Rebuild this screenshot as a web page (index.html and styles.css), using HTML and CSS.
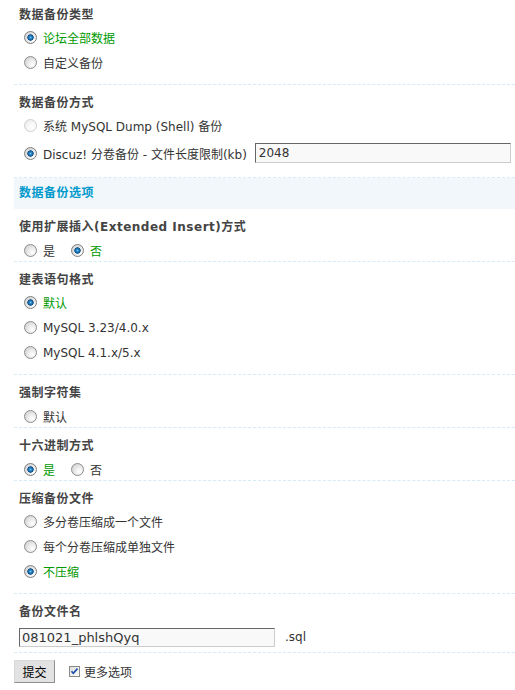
FILE: index.html
```html
<!DOCTYPE html>
<html lang="zh-CN">
<head>
<meta charset="utf-8">
<title>数据备份</title>
<link rel="stylesheet" href="styles.css">
</head>
<body>
<form class="page">
  <div class="sec first">
    <div class="hd">数据备份类型</div>
    <ul class="opts">
      <li><label class="opt on"><input class="radio" type="radio" name="type" checked>论坛全部数据</label></li>
      <li><label class="opt"><input class="radio" type="radio" name="type">自定义备份</label></li>
    </ul>
  </div>

  <div class="sec">
    <div class="hd">数据备份方式</div>
    <ul class="opts">
      <li><label class="opt"><input class="radio" type="radio" name="method" disabled>系统 MySQL Dump (Shell) 备份</label></li>
      <li class="tall"><label class="opt"><input class="radio" type="radio" name="method" checked>Discuz! 分卷备份 - 文件长度限制(kb)</label><input class="txt size" type="text" value="2048"></li>
    </ul>
  </div>

  <div class="partition">数据备份选项</div>

  <div class="sec">
    <div class="hd">使用扩展插入(Extended Insert)方式</div>
    <div class="inline">
      <label class="opt"><input class="radio" type="radio" name="ext">是</label>
      <label class="opt on"><input class="radio" type="radio" name="ext" checked>否</label>
    </div>
  </div>

  <div class="sec">
    <div class="hd">建表语句格式</div>
    <ul class="opts">
      <li><label class="opt on"><input class="radio" type="radio" name="ver" checked>默认</label></li>
      <li><label class="opt"><input class="radio" type="radio" name="ver">MySQL 3.23/4.0.x</label></li>
      <li><label class="opt"><input class="radio" type="radio" name="ver">MySQL 4.1.x/5.x</label></li>
    </ul>
  </div>

  <div class="sec">
    <div class="hd">强制字符集</div>
    <div class="inline">
      <label class="opt"><input class="radio" type="radio" name="charset">默认</label>
    </div>
  </div>

  <div class="sec">
    <div class="hd">十六进制方式</div>
    <div class="inline">
      <label class="opt on"><input class="radio" type="radio" name="hex" checked>是</label>
      <label class="opt"><input class="radio" type="radio" name="hex">否</label>
    </div>
  </div>

  <div class="sec">
    <div class="hd">压缩备份文件</div>
    <ul class="opts">
      <li><label class="opt"><input class="radio" type="radio" name="zip">多分卷压缩成一个文件</label></li>
      <li><label class="opt"><input class="radio" type="radio" name="zip">每个分卷压缩成单独文件</label></li>
      <li><label class="opt on"><input class="radio" type="radio" name="zip" checked>不压缩</label></li>
    </ul>
  </div>

  <div class="sec fname">
    <div class="hd">备份文件名</div>
    <div class="filerow"><input class="txt name" type="text" value="081021_phlshQyq"><span class="ext">.sql</span></div>
  </div>

  <div class="foot">
    <button class="btn" type="button">提交</button>
    <label class="more"><svg class="chk" width="11" height="11" viewBox="0 0 11 11" aria-hidden="true"><defs><linearGradient id="cg" x1="0" y1="0" x2="1" y2="1"><stop offset="0" stop-color="#dcdcd6"/><stop offset="1" stop-color="#ffffff"/></linearGradient></defs><rect x="0.5" y="0.5" width="10" height="10" fill="url(#cg)" stroke="#8a8a8a"/><path d="M2.5 5.2 L4.3 7.3 L8.5 2.6" fill="none" stroke="#2050b0" stroke-width="1.7"/></svg>更多选项</label>
  </div>
</form>
</body>
</html>
```

FILE: styles.css
```css
html, body {
  margin: 0;
  padding: 0;
  background: #fff;
}

body {
  font: 12px "DejaVu Sans", Verdana, "Noto Sans CJK SC", sans-serif;
  color: #333;
}

.page {
  padding-left: 14px;
}

.sec {
  padding: 8px 0 0 5px;
  border-bottom: 1px dashed #d7eaf8;
}

.sec.first {
  padding-top: 5px;
}

.hd {
  height: 20px;
  line-height: 20px;
  font-weight: bold;
  letter-spacing: 0.5px;
  color: #444;
  white-space: nowrap;
}

.opts {
  list-style: none;
  margin: 0;
  padding: 0 0 9px;
}

.opts li {
  height: 25px;
  display: flex;
  align-items: center;
  padding-left: 5px;
}

.opts li.tall {
  height: 30px;
}

.opt {
  display: inline-flex;
  align-items: center;
  white-space: nowrap;
}

.opt.on {
  color: #090;
}

.radio {
  -webkit-appearance: none;
  appearance: none;
  box-sizing: border-box;
  width: 13px;
  height: 13px;
  margin: 0 6px 0 0;
  border-radius: 50%;
  border: 1px solid #8c8c8c;
  background: radial-gradient(circle at 68% 68%, #ffffff 0, #eeeeee 35%, #c8c8c8 100%);
  flex: none;
}

.radio:checked {
  border-color: #7f7f7f;
  background:
    radial-gradient(circle at 50% 50%, #7cc8f2 0, #2684c6 1.3px, #0d4f88 2.9px, rgba(13, 79, 136, 0) 3.5px),
    radial-gradient(circle at 68% 68%, #ffffff 0, #eeeeee 35%, #c8c8c8 100%);
}

.radio:disabled {
  border-color: #cfcfcf;
  background: radial-gradient(circle at 68% 68%, #ffffff 0, #f8f8f8 40%, #e6e6e6 100%);
}

.txt {
  box-sizing: border-box;
  height: 20px;
  padding: 1px 3px;
  font: 12px "DejaVu Sans", Verdana, sans-serif;
  color: #333;
  background: #f9f9f9;
  border: 1px solid;
  border-color: #666 #ccc #ccc #666;
  outline: none;
}

.txt.size {
  width: 256px;
  margin-left: 8px;
}

.partition {
  height: 31px;
  line-height: 31px;
  padding-left: 5px;
  background: #f2f7fc;
  color: #09c;
  font-weight: bold;
  letter-spacing: 0.5px;
}

.inline {
  height: 22px;
  margin-top: 2px;
  display: flex;
  align-items: center;
  gap: 16px;
  padding-left: 5px;
}

.filerow {
  height: 30px;
  display: flex;
  align-items: center;
}

.txt.name {
  width: 256px;
  height: 19px;
  font-size: 13px;
  padding: 0 2px;
}

.ext {
  margin-left: 10px;
}

.foot {
  padding-top: 7px;
  display: flex;
  align-items: center;
}

.btn {
  box-sizing: border-box;
  width: 41px;
  height: 23px;
  padding: 0;
  font: 12px "Noto Sans CJK SC", sans-serif;
  color: #000;
  background: #e2e2e2;
  border: 1px solid;
  border-color: #d8d8d8 #8e8e8e #8e8e8e #d8d8d8;
}

.more {
  display: inline-flex;
  align-items: center;
  margin-left: 14px;
}

.chk {
  margin-right: 4px;
}
```
